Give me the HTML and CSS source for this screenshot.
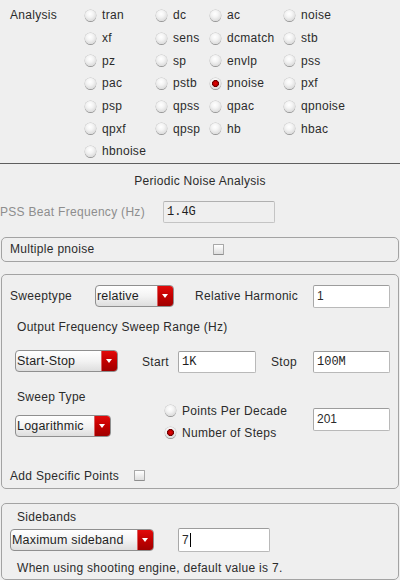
FILE: index.html
```html
<!DOCTYPE html>
<html>
<head>
<meta charset="utf-8">
<link rel="stylesheet" href="styles.css">
</head>
<body>
<div class="analysis">
  <div class="an-label">Analysis</div>
  <div class="radio-grid">
    <label class="opt"><span class="radio"></span>tran</label>
    <label class="opt"><span class="radio"></span>dc</label>
    <label class="opt"><span class="radio"></span>ac</label>
    <label class="opt"><span class="radio"></span>noise</label>
    <label class="opt"><span class="radio"></span>xf</label>
    <label class="opt"><span class="radio"></span>sens</label>
    <label class="opt"><span class="radio"></span>dcmatch</label>
    <label class="opt"><span class="radio"></span>stb</label>
    <label class="opt"><span class="radio"></span>pz</label>
    <label class="opt"><span class="radio"></span>sp</label>
    <label class="opt"><span class="radio"></span>envlp</label>
    <label class="opt"><span class="radio"></span>pss</label>
    <label class="opt"><span class="radio"></span>pac</label>
    <label class="opt"><span class="radio"></span>pstb</label>
    <label class="opt"><span class="radio on"></span>pnoise</label>
    <label class="opt"><span class="radio"></span>pxf</label>
    <label class="opt"><span class="radio"></span>psp</label>
    <label class="opt"><span class="radio"></span>qpss</label>
    <label class="opt"><span class="radio"></span>qpac</label>
    <label class="opt"><span class="radio"></span>qpnoise</label>
    <label class="opt"><span class="radio"></span>qpxf</label>
    <label class="opt"><span class="radio"></span>qpsp</label>
    <label class="opt"><span class="radio"></span>hb</label>
    <label class="opt"><span class="radio"></span>hbac</label>
    <label class="opt"><span class="radio"></span>hbnoise</label>
  </div>
</div>
<div class="sep"></div>
<div class="title">Periodic Noise Analysis</div>
<div class="pss-row">
  <span class="pss-label">PSS Beat Frequency (Hz)</span>
  <span class="field field-disabled mono pss-field">1.4G</span>
</div>

<div class="group multi">
  <span class="multi-label">Multiple pnoise</span>
  <span class="check"></span>
</div>

<div class="group sweep">
  <div class="row r1">
    <span class="sweeptype-label">Sweeptype</span>
    <div class="combo combo-relative"><span class="combo-text">relative</span><span class="combo-btn"></span></div>
    <span class="rh-label">Relative Harmonic</span>
    <span class="field rh-field">1</span>
  </div>
  <div class="row r2">Output Frequency Sweep Range (Hz)</div>
  <div class="row r3">
    <div class="combo combo-startstop"><span class="combo-text">Start-Stop</span><span class="combo-btn"></span></div>
    <span class="start-label">Start</span>
    <span class="field mono start-field">1K</span>
    <span class="stop-label">Stop</span>
    <span class="field mono stop-field">100M</span>
  </div>
  <div class="row r4">
    <div class="st-col">
      <div class="st-label">Sweep Type</div>
      <div class="combo combo-log"><span class="combo-text">Logarithmic</span><span class="combo-btn"></span></div>
    </div>
    <div class="pts-col">
      <label class="opt2"><span class="radio"></span>Points Per Decade</label>
      <label class="opt2"><span class="radio on"></span>Number of Steps</label>
    </div>
    <span class="field steps-field">201</span>
  </div>
  <div class="row r5">
    <span class="asp-label">Add Specific Points</span>
    <span class="check"></span>
  </div>
</div>

<div class="group sidebands">
  <div class="sb-label">Sidebands</div>
  <div class="row sb-row">
    <div class="combo combo-max"><span class="combo-text">Maximum sideband</span><span class="combo-btn"></span></div>
    <span class="field sb-field">7<span class="caret"></span></span>
  </div>
  <div class="sb-note">When using shooting engine, default value is 7.</div>
</div>
</body>
</html>
```

FILE: styles.css
```css
* { box-sizing: border-box; }
html, body {
  margin: 0;
  padding: 0;
  background: #efefef;
  width: 400px;
  height: 580px;
  overflow: hidden;
}
body {
  font-family: "Liberation Sans", Arial, sans-serif;
  font-size: 12px;
  letter-spacing: 0.3px;
  color: #2b2b2b;
}

/* Analysis radio block */
.analysis {
  display: flex;
  padding-top: 4px;
}
.an-label {
  width: 85px;
  padding-left: 10px;
  height: 23px;
  line-height: 23px;
}
.radio-grid {
  display: grid;
  grid-template-columns: 71px 54px 74px 1fr;
  grid-auto-rows: 22.7px;
}
.opt {
  display: flex;
  align-items: center;
  gap: 6px;
}
.radio {
  display: inline-block;
  width: 11px;
  height: 11px;
  border-radius: 50%;
  flex: none;
  background: radial-gradient(circle at 45% 35%, #ffffff 0, #f4f4f4 35%, #dcdcdc 75%, #bdbdbd 100%);
  box-shadow: 0 1px 0 #9a9a9a, 0 0 0 0.5px #c4c4c4;
}
.radio.on {
  background:
    radial-gradient(circle at 50% 50%, #e80000 0, #c00000 2px, #6a0000 3.2px, rgba(0,0,0,0) 3.8px),
    radial-gradient(circle at 45% 35%, #ffffff 0, #f4f4f4 35%, #dcdcdc 75%, #bdbdbd 100%);
}

.sep {
  height: 1px;
  background: #5e5e5e;
  margin: 0;
}
.title {
  margin-top: 6px;
  height: 22px;
  line-height: 22px;
  text-align: center;
}

/* PSS row */
.pss-row {
  display: flex;
  align-items: center;
  margin-top: 9px;
  height: 22px;
}
.pss-label {
  width: 163px;
  color: #8d8d8d;
  white-space: nowrap;
}
.field {
  display: inline-flex;
  align-items: center;
  height: 23px;
  padding-left: 3px;
  background: #ffffff;
  border: 1px solid #b9b9b9;
  border-top-color: #9c9c9c;
  border-left-color: #a8a8a8;
  border-radius: 2px;
  white-space: nowrap;
  letter-spacing: 0;
}
.field-disabled {
  background: #efefef;
  border-color: #c4c4c4;
  border-top-color: #b0b0b0;
}
.mono {
  font-family: "Liberation Mono", "Courier New", monospace;
  font-size: 12px;
  color: #1e1e1e;
}
.pss-field {
  width: 112px;
  height: 22px;
}

/* Group boxes */
.group {
  margin: 0 1px;
  border: 1px solid #a3a3a3;
  border-radius: 5px;
  padding-left: 8px;
}
.multi {
  margin-top: 14px;
  height: 25px;
  display: flex;
  align-items: center;
}
.multi-label {
  width: 203px;
}
.check {
  display: inline-block;
  width: 11px;
  height: 11px;
  border: 1px solid #a8a8a8;
  border-bottom-color: #8e8e8e;
  border-radius: 1px;
  background: linear-gradient(#ffffff, #dedede);
  flex: none;
}

.sweep {
  margin-top: 12px;
  padding-top: 10px;
  padding-bottom: 1px;
}
.row {
  display: flex;
  align-items: center;
}
.r1 { height: 23px; }
.sweeptype-label { width: 85px; }
.combo {
  display: flex;
  height: 22px;
  border: 1px solid #8f8f8f;
  border-radius: 4px;
  overflow: hidden;
  background: linear-gradient(#ffffff, #f3f3f3 50%, #dedede);
  flex: none;
}
.combo-text {
  flex: 1;
  padding-left: 1px;
  line-height: 20px;
  font-size: 12.5px;
  letter-spacing: 0.2px;
  color: #1e1e1e;
  white-space: nowrap;
}
.combo-btn {
  width: 16px;
  position: relative;
  background: linear-gradient(#e20a0a, #c20000 50%, #a00000);
  border-left: 1px solid #d86060;
}
.combo-btn::after {
  content: "";
  position: absolute;
  left: 4px;
  top: 8px;
  border-left: 3.5px solid transparent;
  border-right: 3.5px solid transparent;
  border-top: 4px solid #ffffff;
}
.combo-relative { width: 79px; }
.rh-label { margin-left: 21px; width: 118px; }
.rh-field { width: 77px; }

.r2 {
  margin-top: 8px;
  height: 22px;
  padding-left: 7px;
}
.r3 {
  margin-top: 12px;
  height: 24px;
}
.combo-startstop { width: 103px; margin-left: 5px; margin-top: -2px; }
.start-label { margin-left: 24px; width: 36px; }
.start-field { width: 78px; height: 22px; }
.stop-label { margin-left: 15px; width: 42px; }
.stop-field { width: 77px; height: 22px; }

.r4 {
  margin-top: 12px;
  align-items: flex-start;
}
.st-col { width: 155px; }
.st-label {
  padding-left: 7px;
  height: 22px;
  line-height: 22px;
}
.combo-log { width: 96px; margin-left: 5px; margin-top: 7px; }
.pts-col {
  width: 148px;
  padding-top: 14px;
}
.opt2 {
  display: flex;
  align-items: center;
  gap: 6px;
  height: 22px;
}
.steps-field {
  margin-top: 22px;
  width: 77px;
}

.r5 {
  margin-top: 21px;
  height: 22px;
}
.asp-label { width: 124px; }

.sidebands {
  margin-top: 14px;
  padding-top: 2px;
}
.sb-label {
  padding-left: 7px;
  height: 22px;
  line-height: 22px;
}
.sb-row { height: 24px; }
.combo-max { width: 144px; }
.sb-field {
  margin-left: 24px;
  width: 92px;
  height: 24px;
  font-size: 12px;
}
.caret {
  display: inline-block;
  width: 1px;
  height: 14px;
  background: #000;
  margin-left: 1px;
}
.sb-note {
  margin-top: 5px;
  padding-left: 7px;
  height: 22px;
  line-height: 22px;
  white-space: nowrap;
}
```
